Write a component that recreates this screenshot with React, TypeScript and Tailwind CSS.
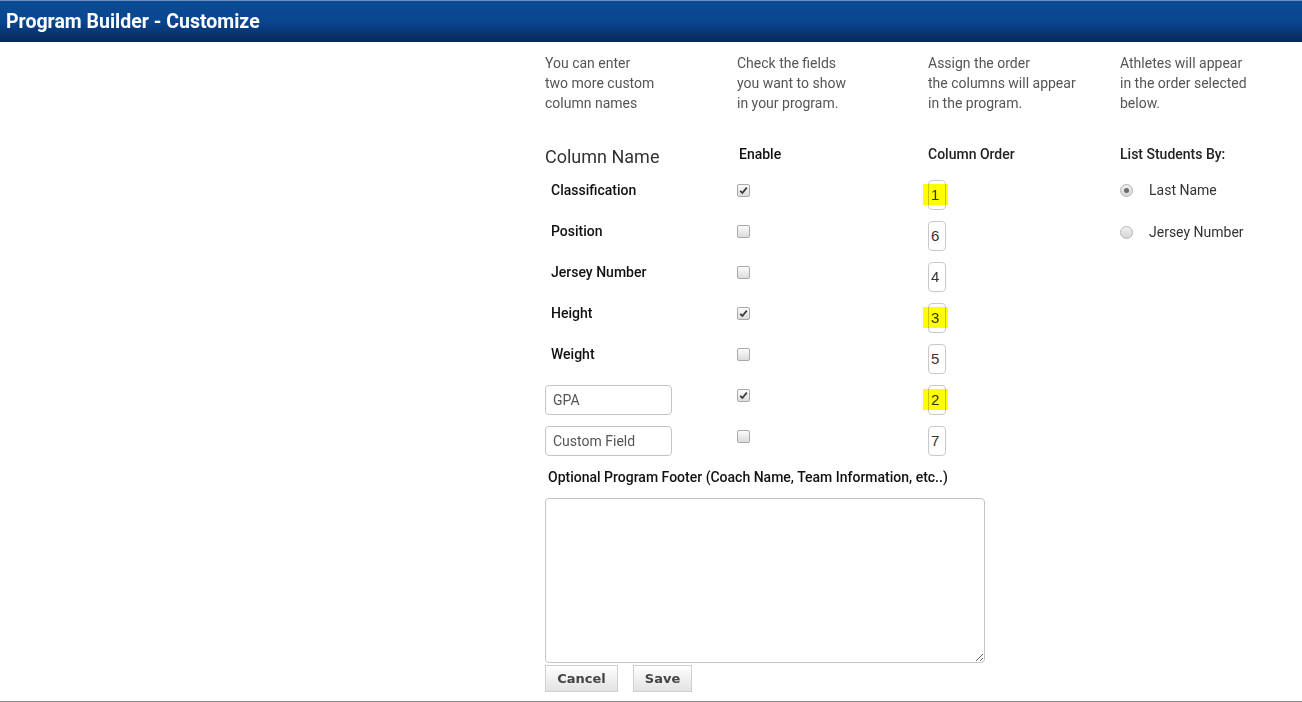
import React from 'react';

const fields = [
  { label: 'Classification', on: true, order: '1', mark: true },
  { label: 'Position', on: false, order: '6', mark: false },
  { label: 'Jersey Number', on: false, order: '4', mark: false },
  { label: 'Height', on: true, order: '3', mark: true },
  { label: 'Weight', on: false, order: '5', mark: false },
  { label: 'GPA', on: true, order: '2', mark: true, custom: true },
  { label: 'Custom Field', on: false, order: '7', mark: false, custom: true },
];

function Check({ on }: { on: boolean }) {
  return (
    <span className="mt-[4px] flex h-[13px] w-[13px] items-center justify-center rounded-[2px] border border-[#a9a9a9] bg-gradient-to-b from-[#fcfcfc] to-[#dcdcdc]">
      {on && (
        <svg width="9" height="9" viewBox="0 0 9 9">
          <path d="M1.2 4.8 L3.4 7 L7.8 1.6" fill="none" stroke="#3c3c3c" strokeWidth="1.8" />
        </svg>
      )}
    </span>
  );
}

function Radio({ on }: { on: boolean }) {
  return (
    <span className="flex h-[13px] w-[13px] items-center justify-center rounded-full border border-[#b4b4b4] bg-gradient-to-b from-[#f0f0f0] to-[#d6d6d6]">
      {on && <span className="h-[5px] w-[5px] rounded-full bg-[#6a6a6a]" />}
    </span>
  );
}

function OrderBox({ value, mark }: { value: string; mark: boolean }) {
  return (
    <div className="relative h-[30px] w-[18px]">
      <div className="flex h-full w-full items-center rounded-[4px] border border-[#c8c8c8] bg-white pl-[2px] font-['Liberation_Sans',sans-serif] text-[15px] text-[#333]">
        {value}
      </div>
      {mark && (
        <div className="absolute left-[-5px] top-[4px] h-[21px] w-[25px] bg-[#ffff00] mix-blend-multiply" />
      )}
    </div>
  );
}

export default function App() {
  return (
    <div className="flex h-[702px] w-full flex-col border-b border-[#8a8a8a] bg-white font-['Roboto',sans-serif]">
      <div className="flex h-[42px] items-center border-t border-[#6f8fbf] bg-gradient-to-b from-[#0b4b95] via-[#0a4690] to-[#06295b] pl-[6px]">
        <h1 className="text-[19.5px] font-bold text-white">Program Builder - Customize</h1>
      </div>

      <div className="ml-[545px] pt-[11px]">
        <div className="grid grid-cols-[192px_191px_192px_182px] text-[14px] leading-[20px] text-[#555]">
          <p>You can enter<br />two more custom<br />column names</p>
          <p>Check the fields<br />you want to show<br />in your program.</p>
          <p>Assign the order<br />the columns will appear<br />in the program.</p>
          <p>Athletes will appear<br />in the order selected<br />below.</p>
        </div>

        <div className="mt-[31px] grid grid-cols-[192px_191px_192px_182px] text-[14px] leading-[20px]">
          <div className="mt-[1px] text-[18px] leading-[24px] text-[#333]">Column Name</div>
          <div className="pl-[2px] font-medium text-[#111]">Enable</div>
          <div className="font-medium text-[#222]">Column Order</div>
          <div className="font-medium text-[#222]">List Students By:</div>
        </div>

        <div className="mt-[11px] flex">
          <div className="flex flex-col">
            {fields.map((f) => (
              <div key={f.label} className="grid h-[41px] grid-cols-[192px_191px_18px] items-start text-[14px] leading-[20px]">
                {f.custom ? (
                  <div className="flex h-[30px] w-[127px] items-center rounded-[4px] border border-[#c4c4c4] px-[7px] text-[#555]">
                    {f.label}
                  </div>
                ) : (
                  <div className="pl-[6px] font-medium text-[#111]">{f.label}</div>
                )}
                <Check on={f.on} />
                <OrderBox value={f.order} mark={f.mark} />
              </div>
            ))}
          </div>

          <div className="ml-[174px] flex flex-col gap-[22px] text-[14px] leading-[20px] text-[#333]">
            <label className="flex items-center gap-[16px]">
              <Radio on={true} />
              <span>Last Name</span>
            </label>
            <label className="flex items-center gap-[16px]">
              <Radio on={false} />
              <span>Jersey Number</span>
            </label>
          </div>
        </div>

        <div className="pl-[3px] text-[14px] font-medium leading-[20px] text-[#111]">
          Optional Program Footer (Coach Name, Team Information, etc..)
        </div>

        <textarea className="mt-[11px] block h-[165px] w-[440px] rounded-[4px] border border-[#c4c4c4] p-2 text-[14px]" />

        <div className="mt-[2px] flex gap-[15px]">
          <button className="h-[27px] w-[73px] border border-[#cfcfcf] bg-gradient-to-b from-[#ffffff] to-[#e2e2e2] font-['DejaVu_Sans',sans-serif] text-[13px] font-bold text-[#444]">
            Cancel
          </button>
          <button className="h-[27px] w-[59px] border border-[#cfcfcf] bg-gradient-to-b from-[#ffffff] to-[#e2e2e2] font-['DejaVu_Sans',sans-serif] text-[13px] font-bold text-[#444]">
            Save
          </button>
        </div>
      </div>
    </div>
  );
}
